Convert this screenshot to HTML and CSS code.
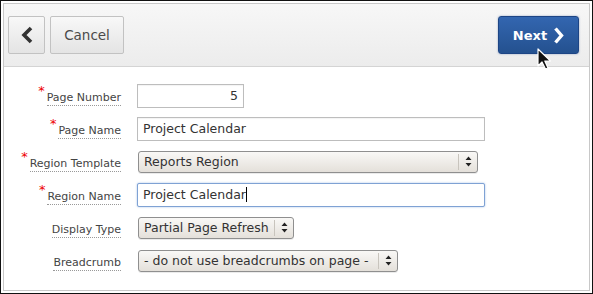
FILE: index.html
```html
<!DOCTYPE html>
<html lang="en">
<head>
    <meta charset="UTF-8">
    <link rel="stylesheet" href="styles.css">
</head>
<body>
    <div class="frame">
        <div class="panel">
            <div class="toolbar">
                <div class="toolbar-left">
                    <button class="btn btn-back">
                        <svg width="14" height="18" viewBox="0 0 14 18"><path d="M11 2 L4 9 L11 16" fill="none" stroke="#333" stroke-width="3.6"/></svg>
                    </button>
                    <button class="btn btn-cancel">Cancel</button>
                </div>
                <button class="btn btn-next">Next
                    <svg width="11" height="17" viewBox="0 0 11 17"><path d="M2.5 1.5 L8.5 8.5 L2.5 15.5" fill="none" stroke="#fff" stroke-width="3.4"/></svg>
                </button>
            </div>

            <div class="form">
                <div class="row">
                    <div class="label-col"><span class="req">*</span><label>Page Number</label></div>
                    <div class="field input input-num">5</div>
                </div>
                <div class="row">
                    <div class="label-col"><span class="req">*</span><label>Page Name</label></div>
                    <div class="field input input-wide">Project Calendar</div>
                </div>
                <div class="row">
                    <div class="label-col"><span class="req">*</span><label>Region Template</label></div>
                    <div class="field select select-wide"><span class="sel-text">Reports Region</span><span class="sel-arrow"><svg width="7" height="11" viewBox="0 0 7 11"><path d="M3.5 0.5 L6.5 4 L0.5 4 Z M3.5 10.5 L6.5 7 L0.5 7 Z" fill="#222"/></svg></span></div>
                </div>
                <div class="row">
                    <div class="label-col"><span class="req">*</span><label>Region Name</label></div>
                    <div class="field input input-wide focused">Project Calendar<span class="caret"></span></div>
                </div>
                <div class="row">
                    <div class="label-col"><label>Display Type</label></div>
                    <div class="field select select-type"><span class="sel-text">Partial Page Refresh</span><span class="sel-arrow"><svg width="7" height="11" viewBox="0 0 7 11"><path d="M3.5 0.5 L6.5 4 L0.5 4 Z M3.5 10.5 L6.5 7 L0.5 7 Z" fill="#222"/></svg></span></div>
                </div>
                <div class="row">
                    <div class="label-col"><label>Breadcrumb</label></div>
                    <div class="field select select-crumb"><span class="sel-text">- do not use breadcrumbs on page -</span><span class="sel-arrow"><svg width="7" height="11" viewBox="0 0 7 11"><path d="M3.5 0.5 L6.5 4 L0.5 4 Z M3.5 10.5 L6.5 7 L0.5 7 Z" fill="#222"/></svg></span></div>
                </div>
            </div>
        </div>

        <!-- mouse pointer over the Next button -->
        <svg class="cursor" width="17" height="23" viewBox="0 0 17 23">
            <path d="M1 1 L1 18 L5 14 L8.5 21 L11 20 L7.8 13 L13.5 13 Z" fill="#111" stroke="#fff" stroke-width="1.2" stroke-linejoin="round"/>
        </svg>
    </div>
</body>
</html>
```

FILE: styles.css
```css
* {
    box-sizing: border-box;
}
body {
    margin: 0;
    background-color: #fff;
    font-family: "DejaVu Sans", "Liberation Sans", sans-serif;
    color: #333;
}
.frame {
    position: relative;
    width: 593px;
    height: 294px;
    border: 1px solid #111;
    padding: 2px;
    background-color: #fff;
}
.panel {
    height: 100%;
    border: 1px solid #c8c8c8;
    background-color: #fff;
}
.toolbar {
    height: 63px;
    display: flex;
    justify-content: space-between;
    align-items: flex-start;
    padding: 12px 10px 0 4px;
    background: linear-gradient(#f7f7f7, #ececec);
    border-bottom: 1px solid #d4d4d4;
}
.toolbar-left {
    display: flex;
    gap: 5px;
}
.btn {
    height: 38px;
    border: 1px solid #c2c2c2;
    border-radius: 2px;
    background: linear-gradient(#f8f8f8, #e4e4e4);
    font-family: inherit;
    color: #4a4a4a;
    display: flex;
    align-items: center;
    justify-content: center;
    padding: 0;
}
.btn-back {
    width: 37px;
}
.btn-cancel {
    width: 74px;
    font-size: 13.5px;
}
.btn-next {
    width: 81px;
    gap: 6px;
    border: 1px solid #1d4585;
    border-radius: 3px;
    background: linear-gradient(#3366b0, #24518f);
    color: #fff;
    font-size: 13px;
    font-weight: bold;
    box-shadow: 0 0 2px rgba(40, 80, 150, 0.5);
}
.form {
    padding-top: 12px;
}
.row {
    height: 33px;
    display: flex;
    align-items: center;
    gap: 16px;
}
.label-col {
    width: 117px;
    display: flex;
    justify-content: flex-end;
    align-items: flex-start;
    padding-top: 5px;
}
.label-col label {
    font-size: 11px;
    color: #444;
    line-height: 13px;
    border-bottom: 1px dotted #999;
    padding-bottom: 1px;
}
.req {
    color: #e00;
    font-size: 13px;
    line-height: 10px;
    margin-top: -5px;
    margin-right: 2px;
}
.field {
    font-size: 12.5px;
    color: #333;
}
.input {
    height: 24px;
    border: 1px solid #bdbdbd;
    background-color: #fff;
    display: flex;
    align-items: center;
    padding: 0 5px;
    box-shadow: inset 0 1px 1px rgba(0, 0, 0, 0.05);
}
.input-num {
    width: 107px;
    justify-content: flex-end;
}
.input-wide {
    width: 348px;
}
.focused {
    border-color: #7fa2d4;
    border-radius: 2px;
    box-shadow: 0 0 2px rgba(90, 140, 210, 0.6);
}
.caret {
    width: 1px;
    height: 15px;
    background-color: #000;
}
.select {
    height: 22px;
    margin-left: 1px;
    display: flex;
    align-items: center;
    border: 1px solid #8f8f8f;
    border-radius: 3px;
    background: linear-gradient(#f9f8f6, #e4e0da);
    box-shadow: 0 1px 0 rgba(0, 0, 0, 0.08);
}
.sel-text {
    flex: 1;
    padding-left: 5px;
    white-space: nowrap;
    overflow: hidden;
}
.sel-arrow {
    width: 19px;
    height: 16px;
    border-left: 1px solid #c8c4bd;
    display: flex;
    align-items: center;
    justify-content: center;
}
.select-wide {
    width: 340px;
}
.select-type {
    width: 156px;
}
.select-crumb {
    width: 260px;
}
.cursor {
    position: absolute;
    left: 536px;
    top: 47px;
}
```
